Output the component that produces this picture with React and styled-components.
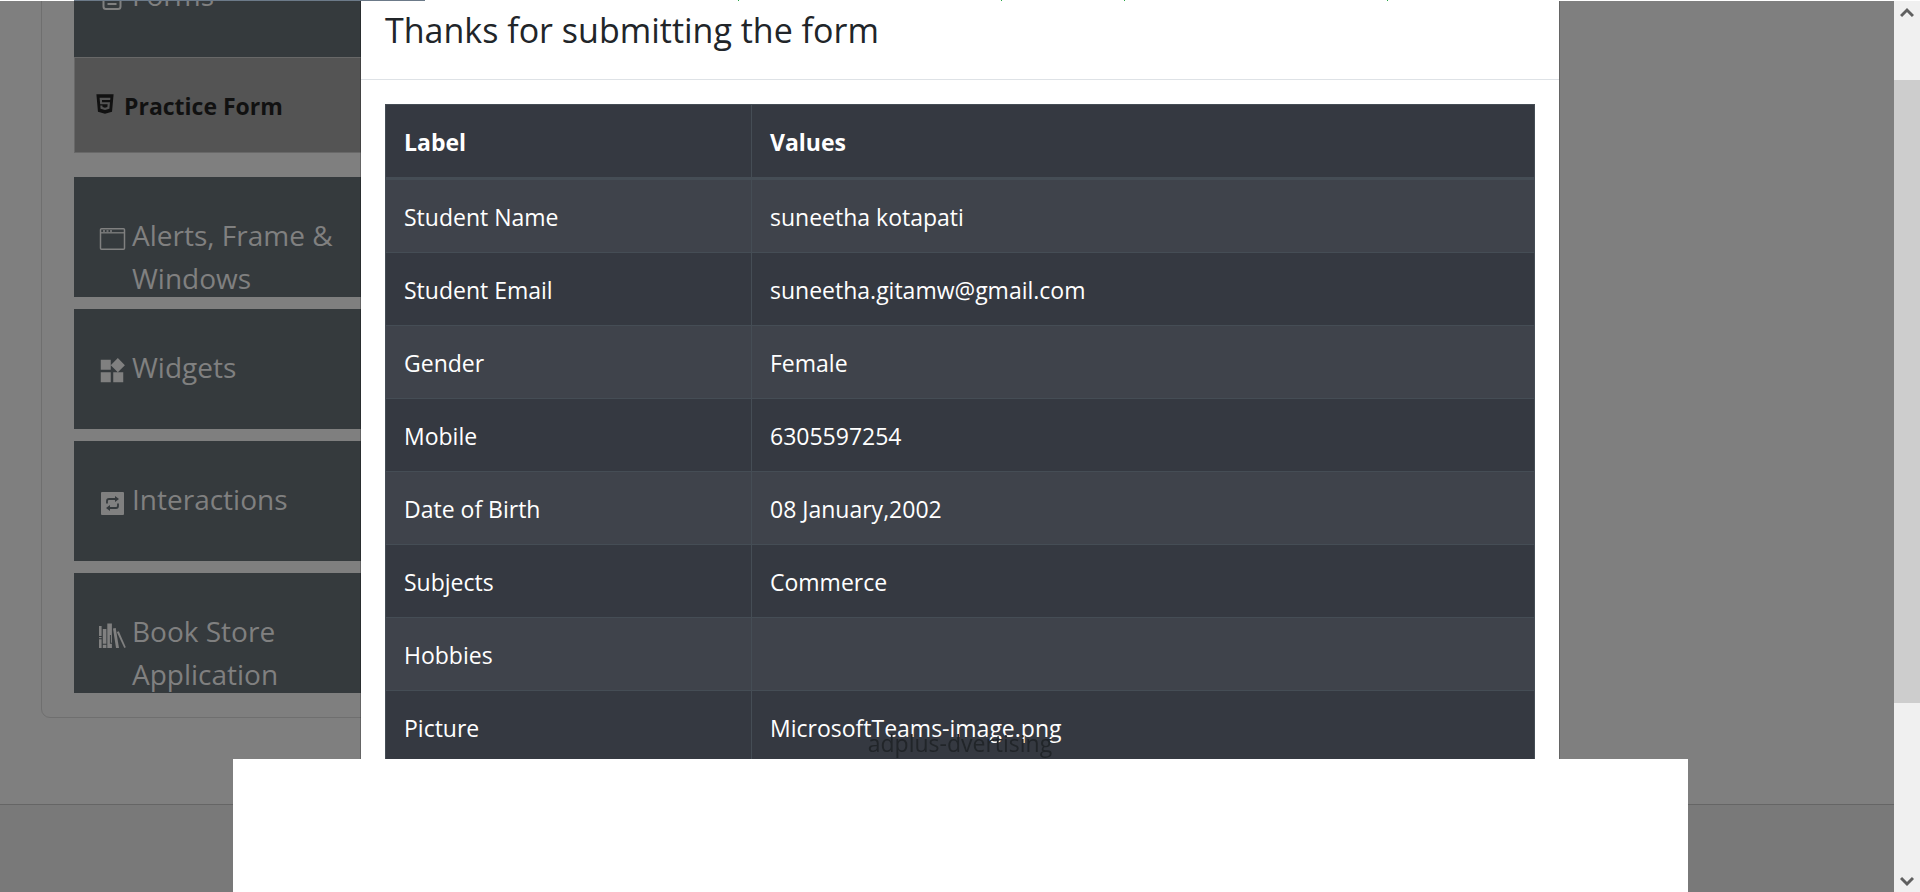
import React from "react";
import styled, { createGlobalStyle } from "styled-components";
import { MdWidgets } from "react-icons/md";
import { AiFillHtml5 } from "react-icons/ai";

const GlobalStyle = createGlobalStyle`
  *, *::before, *::after { box-sizing: border-box; }
  body {
    margin: 0;
    background: #7f7f7f;
    color: #212529;
    font-family: "Open Sans", "Noto Sans", sans-serif;
    font-size: 23px;
    line-height: 36px;
  }
`;

const Screen = styled.div`
  display: grid;
  grid-template: 1px 1fr / 1fr 26px;
  height: 100vh;
  overflow: hidden;
`;

const TopEdge = styled.div`
  grid-column: 1 / -1;
  background: linear-gradient(
    90deg,
    #fff 74px, #6c7a89 74px 425px, #fff 425px 738px,
    #28a745 738px 739px, #fff 739px 1001px,
    #28a745 1001px 1002px, #fff 1002px 1124px,
    #28a745 1124px 1125px, #fff 1125px 1387px,
    #28a745 1387px 1388px, #fff 1388px
  );
`;

const Page = styled.main`
  overflow: hidden;
`;

const Sidebar = styled.aside`
  width: 25%;
  min-width: 420px;
  margin: -89px 0 0 41px;
  padding: 24px 32px;
  border: 1px solid #6f6f6f;
  border-radius: 9px;
`;

const Group = styled.section`
  margin-bottom: ${(p) => (p.$open ? 24 : 12)}px;
  &:last-child { margin-bottom: 0; }
`;

const GroupHeader = styled.button`
  display: flex;
  align-items: flex-start;
  gap: 5px;
  width: 100%;
  height: 120px;
  padding: 37px 23px 0;
  border: 0;
  background: #353a3d;
  color: #808080;
  font: inherit;
  font-size: 28px;
  line-height: 43px;
  text-align: left;
  overflow: hidden;

  svg {
    flex: none;
    width: 30px;
    height: 30px;
    margin-top: 10px;
  }
`;

const GroupTitle = styled.span`
  width: 216px;
`;

const SubItem = styled.a`
  display: flex;
  align-items: center;
  gap: 7px;
  height: 96px;
  padding: 2px 18px 0;
  border: 1px solid #686868;
  background: #545454;
  color: #111;
  font-weight: 700;
  text-decoration: none;

  svg {
    width: 24px;
    height: 24px;
    margin-bottom: 4px;
  }
`;

const Footer = styled.footer`
  height: 100vh;
  margin-top: 86px;
  border-top: 1px solid #656565;
  background: #797979;
`;

const ScrollTrack = styled.div`
  display: flex;
  flex-direction: column;
  background: #f0f0f0;
`;

const ScrollButton = styled.button`
  display: flex;
  justify-content: center;
  align-items: center;
  height: 22px;
  padding: 0;
  border: 0;
  background: none;
`;

const ScrollSpace = styled.div`
  flex: ${(p) => p.$grow} 0 0;
  background: ${(p) => (p.$thumb ? "#cdcdcd" : "none")};
`;

const Modal = styled.div`
  position: fixed;
  top: 1px;
  left: 0;
  right: 0;
  bottom: 0;
  width: 1200px;
  max-width: 100%;
  margin: 0 auto;
  overflow: hidden;
  border: 1px solid rgba(0, 0, 0, 0.2);
  border-width: 0 1px;
  background: #fff;
  background-clip: padding-box;
`;

const ModalHeader = styled.header`
  padding: 2px 24px 22px;
  border-bottom: 1px solid #dee2e6;
`;

const ModalTitle = styled.h1`
  margin: 0;
  font-size: 34px;
  font-weight: 400;
  line-height: 54px;
`;

const ModalBody = styled.div`
  padding: 24px;
`;

const Table = styled.table`
  width: 100%;
  border-collapse: collapse;
  table-layout: fixed;
  background: #353941;
  color: #fff;

  th, td {
    height: 73px;
    padding: 19px 18px 17px;
    border: 1px solid #454d55;
    text-align: left;
  }
  th:first-child { width: 366px; }
  thead th { border-bottom-width: 3px; }
  tbody tr:nth-child(odd) { background: #3f434b; }
`;

const AdBanner = styled.div`
  position: fixed;
  left: 0;
  right: 0;
  bottom: 0;
  width: 1455px;
  max-width: 100%;
  height: 133px;
  margin: 0 auto;
  background: #fff;
`;

const AdLabel = styled.span`
  position: absolute;
  left: 0;
  right: 0;
  bottom: 100%;
  height: 34px;
  text-align: center;
`;

const FormsIcon = () => (
  <svg viewBox="0 0 30 30" fill="none" stroke="currentColor" strokeWidth="2" aria-hidden="true">
    <rect x="6.500" y="4" width="17" height="21" rx="2.500" />
    <path d="M10.500 16h9M10.500 20h9" />
  </svg>
);

const WindowIcon = () => (
  <svg viewBox="0 0 30 30" fill="none" stroke="currentColor" aria-hidden="true">
    <rect x="3.500" y="4.800" width="24" height="20.400" rx="1" strokeWidth="1.500" />
    <path d="M3.500 8.800h24" strokeWidth="1.300" />
    <path d="M6 7h2M9.500 7h2M13 7h2" strokeWidth="1.500" />
  </svg>
);

const RepeatIcon = () => (
  <svg viewBox="0 0 30 30" aria-hidden="true">
    <rect x="4" y="4" width="23" height="23" rx="1" fill="currentColor" />
    <g fill="none" stroke="#353a3d" strokeWidth="1.800">
      <path d="M10 15.500v-2.500q0-2 2-2h6M21 15.500v2.500q0 2-2 2h-6" />
    </g>
    <path d="M18 8l4 3-4 3zM13 17l-4 3 4 3z" fill="#353a3d" />
  </svg>
);

const BooksIcon = () => (
  <svg viewBox="0 0 30 30" fill="currentColor" aria-hidden="true">
    <path d="M2 6h2.600v10H2zM2 17h2.600v1.200H2zM2 19.200h2.600V28H2z" />
    <path d="M5.800 9h3.600v14.700H5.800zM5.800 24.700h3.600V28H5.800z" />
    <path d="M10.300 3.500h4.600v19.200h-1V15h-1v8.700h2V28h-4.600z" />
    <path d="M16 8.500l2.700-.4L22 28h-3z" />
    <path d="M19.800 12l2-.8 7 16-1.500.8z" />
  </svg>
);

const Chevron = ({ down }) => (
  <svg width="14" height="12" viewBox="0 0 14 12" fill="none" stroke="#606060" strokeWidth="3" aria-hidden="true">
    <path d={down ? "M1 3l6 6 6-6" : "M1 10l6-6 6 6"} />
  </svg>
);

const groups = [
  { title: "Forms", icon: <FormsIcon />, items: ["Practice Form"] },
  { title: "Alerts, Frame & Windows", icon: <WindowIcon /> },
  { title: "Widgets", icon: <MdWidgets /> },
  { title: "Interactions", icon: <RepeatIcon /> },
  { title: "Book Store Application", icon: <BooksIcon /> },
];

const rows = [
  ["Student Name", "suneetha kotapati"],
  ["Student Email", "suneetha.gitamw@gmail.com"],
  ["Gender", "Female"],
  ["Mobile", "6305597254"],
  ["Date of Birth", "08 January,2002"],
  ["Subjects", "Commerce"],
  ["Hobbies", ""],
  ["Picture", "MicrosoftTeams-image.png"],
];

export default function App() {
  return (
    <>
      <GlobalStyle />
      <Screen>
        <TopEdge />
        <Page>
          <Sidebar>
            {groups.map((g) => (
              <Group key={g.title} $open={Boolean(g.items)}>
                <GroupHeader type="button">
                  {g.icon}
                  <GroupTitle>{g.title}</GroupTitle>
                </GroupHeader>
                {g.items?.map((item) => (
                  <SubItem key={item} href="#">
                    <AiFillHtml5 />
                    {item}
                  </SubItem>
                ))}
              </Group>
            ))}
          </Sidebar>
          <Footer />
        </Page>
        <ScrollTrack>
          <ScrollButton type="button" aria-label="Scroll up">
            <Chevron />
          </ScrollButton>
          <ScrollSpace $grow={57} />
          <ScrollSpace $grow={623} $thumb />
          <ScrollSpace $grow={167} />
          <ScrollButton type="button" aria-label="Scroll down">
            <Chevron down />
          </ScrollButton>
        </ScrollTrack>
      </Screen>
      <Modal role="dialog" aria-labelledby="modal-title">
        <ModalHeader>
          <ModalTitle id="modal-title">Thanks for submitting the form</ModalTitle>
        </ModalHeader>
        <ModalBody>
          <Table>
            <thead>
              <tr>
                <th scope="col">Label</th>
                <th scope="col">Values</th>
              </tr>
            </thead>
            <tbody>
              {rows.map(([label, value]) => (
                <tr key={label}>
                  <td>{label}</td>
                  <td>{value}</td>
                </tr>
              ))}
            </tbody>
          </Table>
        </ModalBody>
      </Modal>
      <AdBanner>
        <AdLabel>adplus-dvertising</AdLabel>
      </AdBanner>
    </>
  );
}
